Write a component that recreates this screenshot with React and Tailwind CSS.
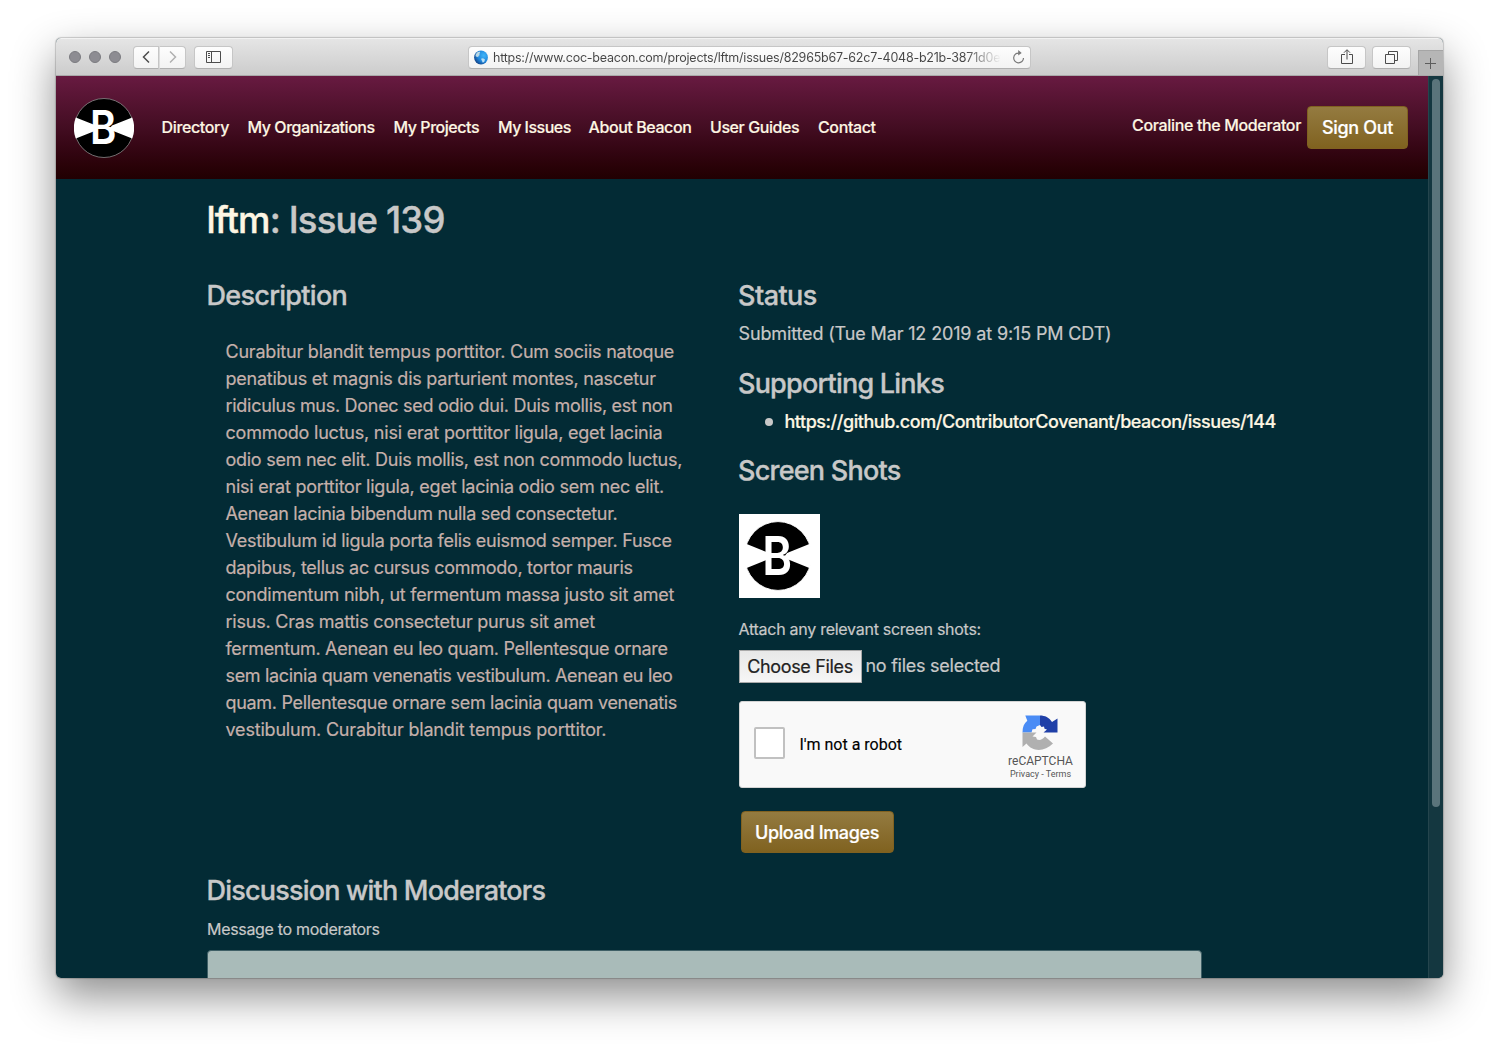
import React from "react";

const PARAGRAPH = [
  { text: "Curabitur blandit tempus porttitor. Cum sociis natoque", tracking: "tracking-[-0.21px]" },
  { text: "penatibus et magnis dis parturient montes, nascetur", tracking: "tracking-[-0.24px]" },
  { text: "ridiculus mus. Donec sed odio dui. Duis mollis, est non", tracking: "tracking-[-0.29px]" },
  { text: "commodo luctus, nisi erat porttitor ligula, eget lacinia", tracking: "tracking-[-0.22px]" },
  { text: "odio sem nec elit. Duis mollis, est non commodo luctus,", tracking: "tracking-[-0.27px]" },
  { text: "nisi erat porttitor ligula, eget lacinia odio sem nec elit.", tracking: "tracking-[-0.23px]" },
  { text: "Aenean lacinia bibendum nulla sed consectetur.", tracking: "tracking-[-0.31px]" },
  { text: "Vestibulum id ligula porta felis euismod semper. Fusce", tracking: "tracking-[-0.28px]" },
  { text: "dapibus, tellus ac cursus commodo, tortor mauris", tracking: "tracking-[-0.28px]" },
  { text: "condimentum nibh, ut fermentum massa justo sit amet", tracking: "tracking-[-0.24px]" },
  { text: "risus. Cras mattis consectetur purus sit amet", tracking: "tracking-[-0.22px]" },
  { text: "fermentum. Aenean eu leo quam. Pellentesque ornare", tracking: "tracking-[-0.32px]" },
  { text: "sem lacinia quam venenatis vestibulum. Aenean eu leo", tracking: "tracking-[-0.33px]" },
  { text: "quam. Pellentesque ornare sem lacinia quam venenatis", tracking: "tracking-[-0.31px]" },
  { text: "vestibulum. Curabitur blandit tempus porttitor.", tracking: "tracking-[-0.19px]" },
];

const NAV = [
  { label: "Directory", width: "w-[67.5px]", tracking: "tracking-[-0.35px]" },
  { label: "My Organizations", width: "w-[127.5px]", tracking: "tracking-[-0.45px]" },
  { label: "My Projects", width: "w-[86px]", tracking: "tracking-[-0.45px]" },
  { label: "My Issues", width: "w-[72px]", tracking: "tracking-[-0.52px]" },
  { label: "About Beacon", width: "w-[103px]", tracking: "tracking-[-0.42px]" },
  { label: "User Guides", width: "w-[89.5px]", tracking: "tracking-[-0.42px]" },
  { label: "Contact", width: "w-[60px]", tracking: "tracking-[-0.38px]" },
];

function ToolButton({ className, children }) {
  return (
    <div
      className={
        "flex h-[23px] items-center justify-center rounded border border-[#c6c6c6] border-b-[#b0b0b0] bg-gradient-to-b from-[#fdfdfd] to-[#f3f3f3] " +
        className
      }
    >
      {children}
    </div>
  );
}

function Toolbar() {
  return (
    <div className="flex h-[38px] shrink-0 items-center border-b border-[#a9a9a9] border-t border-t-[#f2f2f2] bg-gradient-to-b from-[#e5e5e5] to-[#cccccc] pl-[13px]">
      <div className="flex w-[64px] gap-2">
        {[0, 1, 2].map((i) => (
          <div key={i} className="size-3 rounded-full border border-[#7b7b80] bg-[#8d8c92]" />
        ))}
      </div>
      <ToolButton className="w-[26px] rounded-r-none">
        <svg width="10" height="14" viewBox="0 0 10 14" fill="none" stroke="#4c4c4c" strokeWidth="1.5">
          <path d="M8 1.5 2.5 7 8 12.5" />
        </svg>
      </ToolButton>
      <ToolButton className="w-[27px] rounded-l-none border-l-[#dddddd]">
        <svg width="10" height="14" viewBox="0 0 10 14" fill="none" stroke="#b0b0b0" strokeWidth="1.5">
          <path d="M2 1.5 7.5 7 2 12.5" />
        </svg>
      </ToolButton>
      <ToolButton className="ml-2 w-[39px]">
        <svg width="15" height="12" viewBox="0 0 15 12" fill="none" stroke="#4c4c4c">
          <path d="M.5.5h14v11H.5zM5.5.5v11M2 2.5h2M2 4.5h2M2 6.5h2" />
        </svg>
      </ToolButton>
      <div className="ml-[235px] flex h-[23px] w-[563px] items-center rounded border border-[#c6c6c6] border-b-[#b0b0b0] bg-gradient-to-b from-[#fdfdfd] to-[#f3f3f3] pl-[5px] pr-[5px]">
        <svg width="14" height="15" viewBox="0 0 14 15">
          <defs>
            <radialGradient id="sea" cx="0.7" cy="0.35" r="0.8">
              <stop offset="0" stopColor="#3fb4f8" />
              <stop offset="0.55" stopColor="#1f86dc" />
              <stop offset="1" stopColor="#123a7c" />
            </radialGradient>
          </defs>
          <circle cx="7" cy="7.5" r="6.9" fill="url(#sea)" />
          <path d="M1.5 5 3 2.6 5.5 1.5 6.2 2.7 5.2 4 5.8 5 4.5 6 4.2 7.2 3 6.8 1.8 6.5Z" fill="#b9d8e6" />
          <path d="M7 8.8 9 8.3 11 9.6 10.3 11.8 8.8 12.8 8 11Z" fill="#b9dff4" />
        </svg>
        <div className="ml-[5px] mt-0.5 h-[18px] w-[508px] whitespace-nowrap bg-gradient-to-r from-[#454545] from-[93%] to-transparent to-[100%] bg-clip-text text-[12.5px] leading-[18px] tracking-[-0.23px] text-transparent">
          https://www.coc-beacon.com/projects/lftm/issues/82965b67-62c7-4048-b21b-3871d0ef
        </div>
        <svg className="ml-auto" width="12" height="15" viewBox="0 0 12 15" fill="none" stroke="#7a7a7a" strokeWidth="1.2">
          <path d="M6.3 3.1A4.9 4.9 0 1 0 10.500 8" />
          <path d="M5.2 0 8.700 3.1 5.2 5.5Z" fill="#7a7a7a" stroke="none" />
        </svg>
      </div>
      <ToolButton className="ml-[296px] w-[39px]">
        <svg width="12" height="16" viewBox="0 0 12 16" fill="none" stroke="#4c4c4c">
          <path d="M4 5.5H.5v9h11v-9H8M6 10.5V1M3 3.7l3-3 3 3" />
        </svg>
      </ToolButton>
      <ToolButton className="ml-1.5 w-[39px]">
        <svg width="13" height="13" viewBox="0 0 13 13" fill="none" stroke="#4c4c4c">
          <path d="M.5 3.5h9v9h-9zM3.5 3V.5h9v9H10" />
        </svg>
      </ToolButton>
      <div className="ml-[7px] flex h-[25px] flex-1 items-center justify-center self-end border-l border-t border-[#a5a5a5] bg-[#b6b6b6] pr-0.5">
        <svg width="11" height="11" viewBox="0 0 11 11" stroke="#5c5c5c">
          <path d="M5.5 0v11M0 5.5h11" />
        </svg>
      </div>
    </div>
  );
}

/* Beacon mark: dark disc, two light beams and the letter B. */
function Logo({ width, height, ring }) {
  return (
    <svg width={width} height={height} viewBox="0 0 60 60" preserveAspectRatio="none">
      <circle cx="30" cy="30" r="29.5" fill="#000" stroke={ring} strokeWidth="0.8" />
      <path
        d="M1.8 19.5 22 27.500V32.500L1.8 40.5A30 30 0 0 1 1.8 19.5ZM58.2 19.5A30 30 0 0 1 58.2 40.5L38 32.500 36 30 38 27.500Z"
        fill="#fff"
      />
      <text
        transform="translate(29.3 46) scale(0.86 1)"
        textAnchor="middle"
        fontFamily="Inter"
        fontWeight="600"
        fontSize="46.5"
        fill="#fff"
      >
        B
      </text>
    </svg>
  );
}

function Header() {
  return (
    <header className="flex h-[103px] shrink-0 items-center bg-gradient-to-b from-[#681a41] via-[#430d22] to-[#210002] pl-[18px] pr-[20px]">
      <Logo width={60} height={60} ring="#8a8a8a" />
      <nav className="mb-0.5 ml-[27.5px] flex gap-[18.5px] text-[16px] font-medium text-[#fdf6e3] [-webkit-text-stroke:0.15px]">
        {NAV.map((n) => (
          <a key={n.label} className={"whitespace-nowrap " + n.width + " " + n.tracking}>
            {n.label}
          </a>
        ))}
      </nav>
      <div className="mb-[5px] ml-auto whitespace-nowrap text-[16px] font-medium tracking-[-0.35px] text-[#fdf6e3] [-webkit-text-stroke:0.15px]">
        Coraline the Moderator
      </div>
      <GoldButton className="ml-1.5 h-[43px] w-[101px]">Sign Out</GoldButton>
    </header>
  );
}

function GoldButton({ className, children }) {
  return (
    <button
      className={
        "flex items-center justify-center whitespace-nowrap rounded border border-[#806120] bg-gradient-to-b from-[#947b40] to-[#80621f] text-[18px] font-medium tracking-[-0.35px] text-white [-webkit-text-stroke:0.2px] " +
        className
      }
    >
      {children}
    </button>
  );
}

function Heading({ className, children }) {
  return (
    <h2
      className={
        "-ml-[0.5px] whitespace-nowrap text-[27px] font-medium leading-8 text-[#c8c8c8] [-webkit-text-stroke:0.35px] " +
        className
      }
    >
      {children}
    </h2>
  );
}

function Recaptcha() {
  return (
    <div className="mt-[18px] flex h-[87px] w-[347px] rounded-[3px] border border-[#d3d3d3] bg-[#f9f9f9] font-['Roboto'] [-webkit-text-stroke:0px]">
      <div className="ml-[14px] mt-[25px] h-[32px] w-[31px] rounded-[2px] border-2 border-[#c1c1c1] bg-white" />
      <div className="ml-[15px] mt-[31px] whitespace-nowrap text-[16px] leading-6 text-black [-webkit-text-stroke:0.15px]">I'm not a robot</div>
      <div className="ml-auto mr-[11px] flex w-[66px] flex-col items-center pt-[13px]">
        <svg className="mr-px" width="36" height="35" viewBox="0 0 36 35">
          <path d="M18 .5V10L14.5 11.5 13.5 14 10.5 14.2 9.5 17.5H.5C.5 12 2 8.5 5.3 5.8L3.3.5Z" fill="#4a8cf5" />
          <path d="M18 .5C23 .5 27 2.5 30 7L35.5 3.5V17.5H21.5L25 14.5 22.5 13.8 22 11.5 19.5 12 18 10Z" fill="#2040a8" />
          <path d="M.5 17.5H14.5L10.5 21.5 14 22 15 24.5C18 25.5 20.5 24.5 23 21.5L31 28.5C22.5 37 10.5 37 4.5 28.5L.5 32Z" fill="#b0b0b0" />
        </svg>
        <div className="mt-1 text-[12px] leading-[15px] text-[#555555]">reCAPTCHA</div>
        <div className="whitespace-nowrap text-[9px] leading-[11px] text-[#555555]">Privacy - Terms</div>
      </div>
    </div>
  );
}

function Details() {
  return (
    <section className="flex w-[560px] flex-col items-start">
      <Heading className="tracking-[-0.55px]">Status</Heading>
      <p className="mt-2 whitespace-nowrap text-[18px] leading-[27px] tracking-[-0.14px]">
        Submitted (Tue Mar 12 2019 at 9:15 PM CDT)
      </p>
      <Heading className="mt-[21px] tracking-[-0.78px]">Supporting Links</Heading>
      <ul className="mt-2 flex items-center">
        <li className="flex items-center whitespace-nowrap pl-[26px] text-[18px] font-medium leading-[27px] tracking-[-0.46px] text-[#fdf6e3]">
          <span className="mr-3 size-2 rounded-full bg-[#c8c8c8]" />
          https://github.com/ContributorCovenant/beacon/issues/144
        </li>
      </ul>
      <Heading className="mt-5 tracking-[-0.76px]">Screen Shots</Heading>
      <div className="mt-[27px] flex h-[84px] w-[81px] items-center justify-center bg-white pr-[2px]">
        <Logo width={68} height={70} ring="#ffffff" />
      </div>
      <p className="mt-[19px] whitespace-nowrap text-[16px] leading-6 tracking-[-0.27px]">Attach any relevant screen shots:</p>
      <div className="mt-[9px] flex h-[33px] items-center">
        <div className="flex h-[33px] w-[123px] items-center justify-center whitespace-nowrap border border-[#a9a9a9] bg-gradient-to-b from-[#e8e8e8] to-[#f6f6f6] text-[18px] tracking-[-0.35px] text-[#222222]">
          Choose Files
        </div>
        <span className="mb-0.5 ml-1 whitespace-nowrap text-[18px] tracking-[-0.26px]">no files selected</span>
      </div>
      <Recaptcha />
      <GoldButton className="ml-0.5 mt-[23px] h-[42px] w-[153px]">Upload Images</GoldButton>
    </section>
  );
}

export default function App() {
  return (
    <div className="h-[1052px] w-[1499px] overflow-hidden bg-white pl-14 pt-[38px] font-['Inter',sans-serif]">
      <div className="h-[940px] w-[1387px] rounded-[5px] shadow-[0_0_1px_1px_rgba(0,0,0,0.18),0_18px_44px_rgba(0,0,0,0.45)]">
        <div className="flex h-full flex-col overflow-hidden rounded-[5px] bg-[#032b35]">
          <Toolbar />
          <div className="flex min-h-0 flex-1">
            <div className="flex w-[1372px] flex-col overflow-hidden">
              <Header />
              <main className="flex flex-col pl-[151px] text-[#c8c8c8] [-webkit-text-stroke:0.2px]">
                <h1 className="-ml-[0.5px] mt-5 whitespace-nowrap text-[36.5px] font-medium leading-[43px] tracking-[-0.85px] [-webkit-text-stroke:0.4px]">
                  <span className="text-[#fdf6e3]">lftm</span>: Issue 139
                </h1>
                <div className="mt-[38px] flex">
                  <section className="w-[531.5px]">
                    <Heading className="tracking-[-0.7px]">Description</Heading>
                    <p className="ml-[18.5px] mt-[26px] text-[18px] leading-[27px] text-[#c5b0ab]">
                      {PARAGRAPH.map((line) => (
                        <span key={line.text} className={"block whitespace-nowrap " + line.tracking}>
                          {line.text}
                        </span>
                      ))}
                    </p>
                  </section>
                  <Details />
                </div>
                <Heading className="mt-[22px] tracking-[-0.8px]">Discussion with Moderators</Heading>
                <label className="mt-[10px] text-[16px] leading-6 tracking-[-0.32px]">Message to moderators</label>
                <div className="mt-[9px] h-20 w-[995px] rounded border border-[#3f5f66] bg-[#a9bbb9]" />
              </main>
            </div>
            <div className="flex w-[15px] justify-center border-l border-[#24454d] bg-[#143740] pt-[3px]">
              <div className="h-[728px] w-2 rounded-full bg-[#5a747b]" />
            </div>
          </div>
        </div>
      </div>
    </div>
  );
}
